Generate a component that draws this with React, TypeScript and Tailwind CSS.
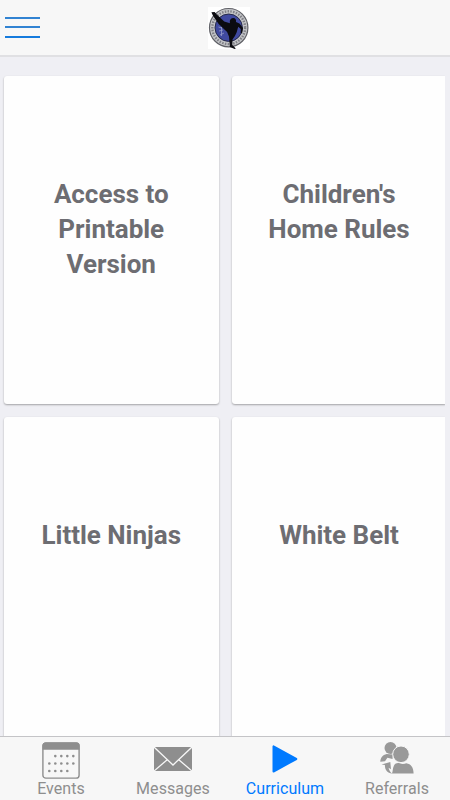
import type { ReactNode } from 'react';

const cards = ['Access to Printable Version', "Children's Home Rules", 'Little Ninjas', 'White Belt'];

function ClubLogo() {
  return (
    <svg className="h-[42px] w-[42px]" viewBox="0 0 42 42">
      <rect width="42" height="42" fill="#fff" />
      <circle cx="20.7" cy="20.7" r="19.2" fill="#c4c5c8" stroke="#606167" strokeWidth="1.2" />
      <circle cx="20.7" cy="20.7" r="16.4" fill="none" stroke="#808187" strokeWidth="2.4" strokeDasharray="1.5 1.3" />
      <circle cx="20.7" cy="20.7" r="13.7" fill="#404aa0" stroke="#262a49" strokeWidth="1" />
      <path d="M10.5 20l3.5 1M11 24l4-1M12 28l4-2M13.5 20v9" fill="none" stroke="#979dcb" strokeWidth="0.8" />
      <path
        d="M3.4 5.2l3.2-.3 2.2 2.7 7.4 7 5.8 1.7c-.7-2.6.6-5.2 3-5.4 2.4-.1 3.5 1.9 3 4.2l3.4 1.5 3.6 4.4-.9 5.2-1.5-.3.2-3.8-2.6-2.4-1.6 5.7-1.7 3.6-2.4 3.6-.2 5.5 3.5 3.3-1.1.6-4.8-2.1-.9-10.4-1.9-4.6-8.4-7.8-5.7-8.4z"
        fill="#0b0b10"
      />
    </svg>
  );
}

function EventsIcon() {
  return (
    <svg className="mt-0.5 h-[37px] w-[38px]" viewBox="0 0 38 38" preserveAspectRatio="none">
      <rect x="0.9" y="0.9" width="36.2" height="36.2" rx="3" fill="#f7f7f7" stroke="#8e8e8e" strokeWidth="1.4" />
      <path d="M.5 8V3.5a3 3 0 0 1 3-3h31a3 3 0 0 1 3 3V8z" fill="#8e8e8e" />
      {[14.5, 22, 29.8].map((y, row) =>
        [7.3, 13.3, 19.3, 25.3, 31.3]
          .filter((_, col) => !(row === 0 && col === 0) && !(row === 2 && col === 4))
          .map((x) => <circle key={`${x}-${y}`} cx={x} cy={y} r="1.3" fill="#8e8e8e" />)
      )}
    </svg>
  );
}

function MessagesIcon() {
  return (
    <svg className="h-6 w-[38px]" viewBox="0 0 38 24">
      <rect width="38" height="24" fill="#8e8e8e" />
      <path d="M0 0l19 18L38 0M0 24l13.5-11.5M38 24L24.5 12.5" fill="none" stroke="#f7f7f7" strokeWidth="1.3" />
    </svg>
  );
}

function CurriculumIcon() {
  return (
    <svg className="h-7 w-[26px]" viewBox="0 0 26 28">
      <path d="M1.5 1.4v25.2L24.3 14z" fill="#007aff" stroke="#007aff" strokeWidth="2" strokeLinejoin="round" />
    </svg>
  );
}

function ReferralsIcon() {
  return (
    <svg className="mr-0.5 mb-0.5 h-[34px] w-[36px]" viewBox="0 0 36 34">
      <g fill="#999">
        <circle cx="12.5" cy="7" r="6" />
        <path d="M2.3 20.7c.2-4.1 2.3-6.9 6.4-7.8l6.3.6-.5 4.4-5.1-1.1-2.4 3.5z" />
        <path d="M3.5 23.5l8.8-2.4.7 7.2-2.4-1.5c.4 2.5 1.6 4.2 3.6 6-4.7-.7-7.4-3.6-7.3-8.7z" />
        <path d="M14 32.4c1-2.2.6-5.4 2-7.9 1.3-2.3 3.6-2.9 5.7-2.2 2.2.9 4.5.8 6.6 0 4.9.7 7.2 4.3 7.3 10.1z" />
      </g>
      <circle cx="23" cy="13.3" r="8.3" fill="#999" stroke="#f7f7f7" strokeWidth="1" />
    </svg>
  );
}

type Tab = { label: string; icon: ReactNode; active?: boolean };

const tabs: Tab[] = [
  { label: 'Events', icon: <EventsIcon /> },
  { label: 'Messages', icon: <MessagesIcon /> },
  { label: 'Curriculum', icon: <CurriculumIcon />, active: true },
  { label: 'Referrals', icon: <ReferralsIcon /> },
];

export default function App() {
  return (
    <div className="flex h-screen flex-col overflow-hidden bg-[#efeff4] font-['Roboto',sans-serif]">
      <header className="flex h-[57px] shrink-0 items-center border-b-2 border-[#e0e0e3] bg-[#f7f7f7]">
        <button aria-label="Menu" className="mr-[168px] mb-px ml-[5px] flex w-[35px] flex-col gap-[7.5px]">
          <span className="h-0.5 bg-[#3183d2]" />
          <span className="h-0.5 bg-[#3183d2]" />
          <span className="h-0.5 bg-[#157bdd]" />
        </button>
        <ClubLogo />
      </header>

      <main className="mr-[5px] grid min-h-0 flex-1 auto-rows-[328px] grid-cols-[214.5px_215px] gap-x-[13px] gap-y-[13px] overflow-hidden pt-[19px] pl-1">
        {cards.map((title) => (
          <article
            key={title}
            className="rounded-[3px] bg-[#fefefe] px-7 pt-[101px] text-center shadow-[0_1px_2px_rgba(0,0,0,0.32)]"
          >
            <h2 className="text-[26px] leading-[35px] font-bold tracking-[-0.02px] text-[#6d6d72]">{title}</h2>
          </article>
        ))}
      </main>

      <nav className="grid h-16 shrink-0 grid-cols-[repeat(4,112px)] border-t border-[#c4c4c7] bg-[#f7f7f7] pl-[5px]">
        {tabs.map(({ label, icon, active }) => (
          <a
            key={label}
            className={`flex flex-col items-center pt-[3px] text-base leading-[21px] ${active ? 'text-[#007aff]' : 'text-[#8e8e8e]'}`}
          >
            <span className="flex h-[38px] items-center">{icon}</span>
            <span className="tracking-[0.05px]">{label}</span>
          </a>
        ))}
      </nav>
    </div>
  );
}
